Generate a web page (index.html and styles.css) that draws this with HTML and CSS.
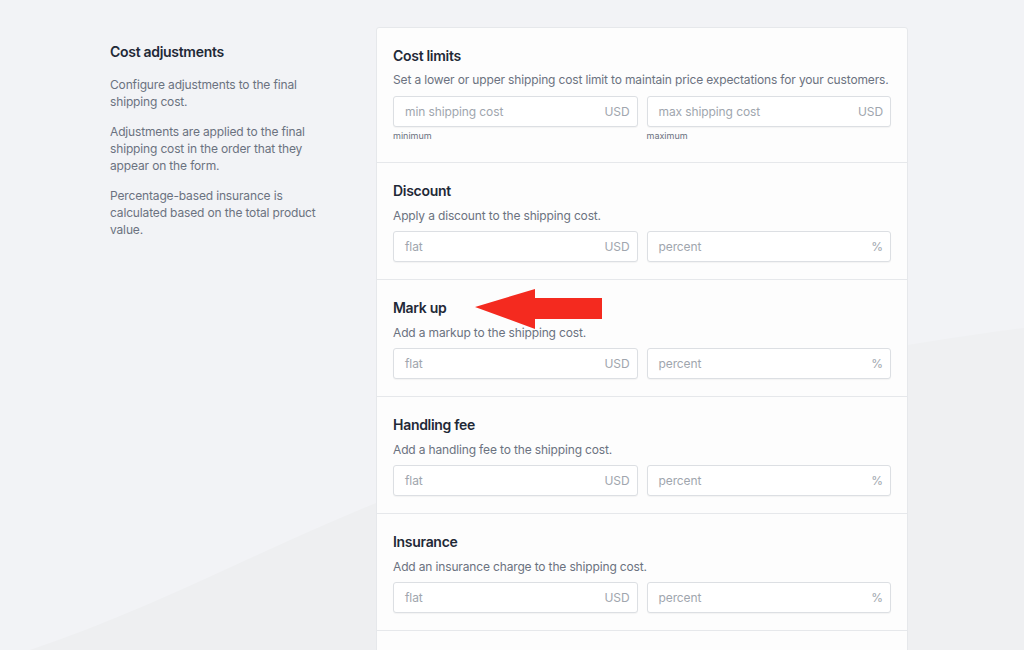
FILE: index.html
```html
<!DOCTYPE html>
<html>
<head>
<meta charset="utf-8">
<link rel="stylesheet" href="styles.css">
</head>
<body>
<svg class="bg" width="1024" height="650" viewBox="0 0 1024 650" aria-hidden="true">
  <path d="M30 650 C 150 610, 260 550, 376 503 L 376 650 Z" fill="#eeeff1"/>
  <path d="M908 345 C 950 338, 990 332, 1024 328 L 1024 650 L 908 650 Z" fill="#eff0f2"/>
</svg>
<div class="page">
  <aside class="intro">
    <h2 class="intro-title">Cost adjustments</h2>
    <p>Configure adjustments to the final shipping cost.</p>
    <p>Adjustments are applied to the final shipping cost in the order that they appear on the form.</p>
    <p>Percentage-based insurance is calculated based on the total product value.</p>
  </aside>
  <main class="card">
    <section class="sec first">
      <h3 class="sec-title">Cost limits</h3>
      <p class="sec-desc">Set a lower or upper shipping cost limit to maintain price expectations for your customers.</p>
      <div class="row">
        <div class="field">
          <div class="input"><span class="ph">min shipping cost</span><span class="unit">USD</span></div>
          <div class="hint">minimum</div>
        </div>
        <div class="field">
          <div class="input"><span class="ph">max shipping cost</span><span class="unit">USD</span></div>
          <div class="hint">maximum</div>
        </div>
      </div>
    </section>
    <section class="sec">
      <h3 class="sec-title">Discount</h3>
      <p class="sec-desc">Apply a discount to the shipping cost.</p>
      <div class="row">
        <div class="input"><span class="ph">flat</span><span class="unit">USD</span></div>
        <div class="input"><span class="ph">percent</span><span class="unit">%</span></div>
      </div>
    </section>
    <section class="sec markup">
      <h3 class="sec-title">Mark up</h3>
      <p class="sec-desc">Add a markup to the shipping cost.</p>
      <div class="row">
        <div class="input"><span class="ph">flat</span><span class="unit">USD</span></div>
        <div class="input"><span class="ph">percent</span><span class="unit">%</span></div>
      </div>
      <svg class="arrow" width="130" height="42" viewBox="0 0 130 42" aria-hidden="true">
        <path d="M0 18 L60 0 L60 9 L127 9 L127 30 L60 30 L60 40 Z" fill="#f42a1f"/>
      </svg>
    </section>
    <section class="sec">
      <h3 class="sec-title">Handling fee</h3>
      <p class="sec-desc">Add a handling fee to the shipping cost.</p>
      <div class="row">
        <div class="input"><span class="ph">flat</span><span class="unit">USD</span></div>
        <div class="input"><span class="ph">percent</span><span class="unit">%</span></div>
      </div>
    </section>
    <section class="sec">
      <h3 class="sec-title">Insurance</h3>
      <p class="sec-desc">Add an insurance charge to the shipping cost.</p>
      <div class="row">
        <div class="input"><span class="ph">flat</span><span class="unit">USD</span></div>
        <div class="input"><span class="ph">percent</span><span class="unit">%</span></div>
      </div>
    </section>
    <section class="sec">
      <h3 class="sec-title">&nbsp;</h3>
    </section>
  </main>
</div>
</body>
</html>
```
FILE: styles.css
```css
* { box-sizing: border-box; }
html, body { margin: 0; padding: 0; }
body {
  width: 1024px;
  height: 650px;
  overflow: hidden;
  background: #f2f3f6;
  font-family: Inter, "Noto Sans", "Liberation Sans", sans-serif;
  color: #1f2937;
  position: relative;
}
.bg {
  position: absolute;
  left: 0;
  top: 0;
  z-index: 0;
}
.page {
  position: relative;
  z-index: 1;
  display: grid;
  grid-template-columns: 266px 532px;
  margin-left: 110px;
  padding-top: 27px;
}
.intro {
  padding-top: 16px;
  padding-right: 50px;
}
.intro-title {
  margin: 0 0 15px;
  font-size: 14px;
  font-weight: 600;
  line-height: 18px;
  letter-spacing: -0.3px;
  color: #1f2937;
}
.intro p {
  margin: 0 0 13px;
  font-size: 12px;
  line-height: 17px;
  letter-spacing: -0.15px;
  color: #6b7280;
}
.card {
  background: #fdfdfd;
  border: 1px solid #e6e8eb;
  border-radius: 3px 3px 0 0;
  height: 640px;
}
.sec {
  position: relative;
  padding: 18px 16px 17px 16px;
  border-top: 1px solid #e6e8eb;
}
.sec .sec-desc { margin-top: 6px; }
.sec .row { margin-top: 7px; }
.sec.first {
  border-top: none;
  padding-top: 18px;
  padding-bottom: 20px;
}
.sec.first .sec-desc { margin-top: 5px; }
.sec.first .row { margin-top: 8px; }
.sec-title {
  margin: 0;
  font-size: 14px;
  font-weight: 600;
  line-height: 20px;
  letter-spacing: -0.3px;
  color: #1f2937;
}
.sec-desc {
  margin: 0;
  font-size: 12px;
  line-height: 17px;
  letter-spacing: -0.15px;
  color: #6b7280;
}
.row {
  display: grid;
  grid-template-columns: 1fr 1fr;
  gap: 9px;
}
.input {
  height: 31px;
  border: 1px solid #dcdfe3;
  border-radius: 3px;
  background: #fff;
  box-shadow: 0 1px 1px rgba(0,0,0,0.04);
  display: flex;
  align-items: center;
  justify-content: space-between;
  padding: 0 7px 0 11px;
  font-size: 12px;
  letter-spacing: -0.1px;
  color: #a0a6ae;
}
.hint {
  margin-top: 3px;
  font-size: 9px;
  line-height: 12px;
  color: #6b7280;
}
.arrow {
  position: absolute;
  left: 98px;
  top: 9px;
}
```
